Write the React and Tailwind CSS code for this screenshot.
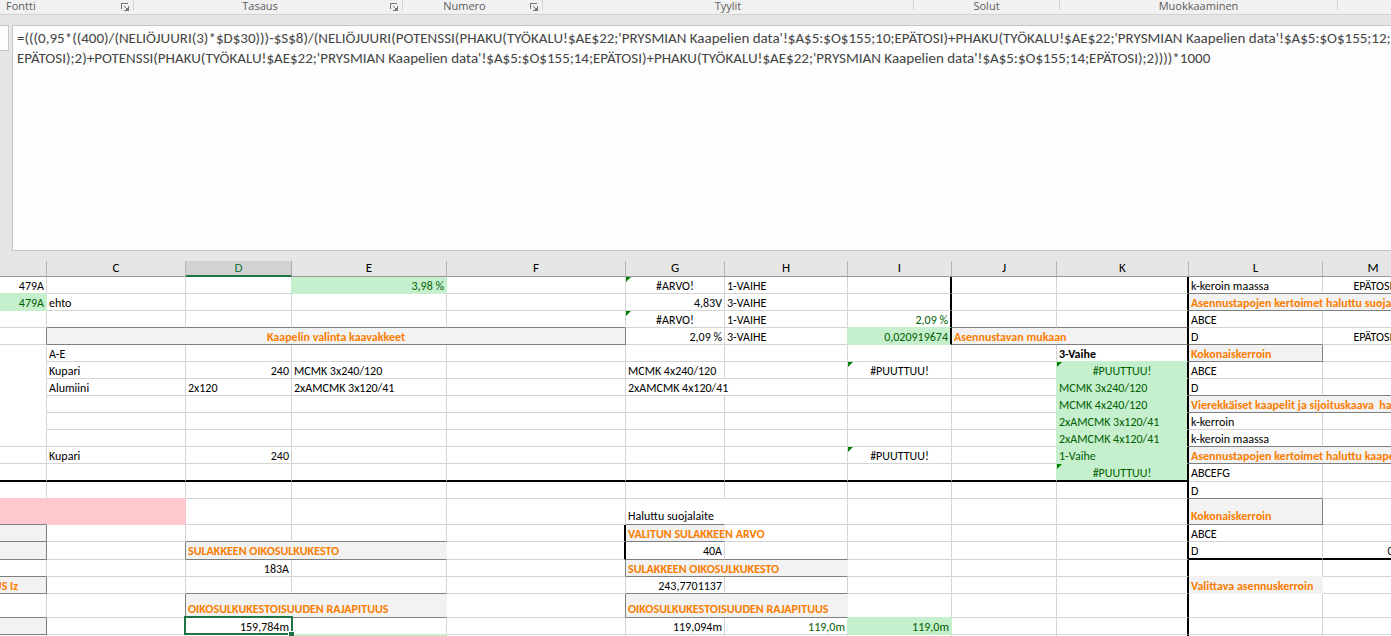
import React from "react";

const COLUMNS = [
  ["", "w-[47px]"],
  ["C", "w-[139px]"],
  ["D", "w-[106px]"],
  ["E", "w-[155px]"],
  ["F", "w-[179px]"],
  ["G", "w-[99px]"],
  ["H", "w-[123px]"],
  ["I", "w-[104px]"],
  ["J", "w-[105px]"],
  ["K", "w-[132px]"],
  ["L", "w-[134px]"],
  ["M", "w-[101px]"],
];

const TONES = {
  plain: "text-black",
  bold: "font-bold text-black",
  head: "bg-[#f2f2f2] font-bold text-[#fa7d00]",
  good: "bg-[#c6efce] text-[#006100]",
  goodText: "text-[#006100]",
  bad: "bg-[#ffc7ce]",
};

const RIGHT = {
  line: "border-r border-r-[#d4d4d4]",
  grey: "border-r border-r-[#7f7f7f]",
  good: "border-r border-r-[#c6efce]",
  head: "border-r border-r-[#f2f2f2]",
  bad: "border-r border-r-[#ffc7ce]",
  none: "border-r border-r-transparent",
  black: "border-r-2 border-r-black",
};

const BOTTOM = {
  line: "border-b border-b-[#d4d4d4]",
  grey: "border-b border-b-[#7f7f7f]",
  good: "border-b border-b-[#c6efce]",
  head: "border-b border-b-[#f2f2f2]",
  bad: "border-b border-b-[#ffc7ce]",
  black: "border-b-2 border-b-black",
};

const ALIGN = { l: "text-left", c: "text-center", r: "text-right" };

const _ = {};
const G = { b: "grey" };
const KB = { r: "black" };
const BB = { b: "black" };

// t text, a align, k tone, r right edge, b bottom edge, s column span, rs row span
const ROWS = [
  ["h-[17px]", [{ t: "479A", a: "r", b: "good" }, _, { r: "good" }, { t: "3,98 %", a: "r", k: "good", r: "good", b: "good" }, _, { t: "#ARVO!", a: "c", flag: true }, { t: "1-VAIHE" }, KB, _, KB, { t: "k-keroin maassa", b: "grey" }, { t: "EPÄTOSI", a: "c", b: "grey" }]],
  ["h-[17px]", [{ t: "479A", a: "r", k: "good", r: "good", b: "good" }, { t: "ehto" }, _, _, _, { t: "4,83V", a: "r" }, { t: "3-VAIHE" }, KB, _, KB, { t: "Asennustapojen kertoimet haluttu suojalaite", k: "head", b: "grey", s: 2 }]],
  ["h-[17px]", [_, G, G, G, G, { t: "#ARVO!", a: "c", flag: true }, { t: "1-VAIHE" }, { t: "2,09 %", a: "r", k: "goodText", r: "black", b: "good" }, G, { r: "black", b: "grey" }, { t: "ABCE" }, _]],
  ["h-[17px]", [{ r: "grey" }, { t: "Kaapelin valinta kaavakkeet", a: "c", k: "head", s: 4, r: "grey", b: "grey" }, { t: "2,09 %", a: "r" }, { t: "3-VAIHE", r: "good" }, { t: "0,020919674", a: "r", k: "good", r: "black", b: "good" }, { t: "Asennustavan mukaan", k: "head", s: 2, r: "black", b: "grey" }, { t: "D", b: "grey" }, { t: "EPÄTOSI", a: "c" }]],
  ["h-[17px]", [{ rs: 6 }, { t: "A-E" }, _, _, _, _, _, _, _, { t: "3-Vaihe", k: "bold", r: "black", b: "good" }, { t: "Kokonaiskerroin", k: "head", r: "grey", b: "grey" }, _]],
  ["h-[17px]", [{ t: "Kupari" }, { t: "240", a: "r" }, { t: "MCMK 3x240/120" }, _, { t: "MCMK 4x240/120" }, _, { t: "#PUUTTUU!", a: "c", flag: true }, { r: "good" }, { t: "#PUUTTUU!", a: "c", k: "good", flag: true, r: "black", b: "good" }, { t: "ABCE" }, _]],
  ["h-[17px]", [{ t: "Alumiini" }, { t: "2x120" }, { t: "2xAMCMK 3x120/41" }, _, { t: "2xAMCMK 4x120/41", s: 2 }, _, { r: "good" }, { t: "MCMK 3x240/120", k: "good", r: "black", b: "good" }, { t: "D", b: "grey" }, G]],
  ["h-[17px]", [_, _, _, _, _, _, _, { r: "good" }, { t: "MCMK 4x240/120", k: "good", r: "black", b: "good" }, { t: "Vierekkäiset kaapelit ja sijoituskaava  haluttu", k: "head", s: 2, b: "grey" }]],
  ["h-[17px]", [_, _, _, _, _, _, _, { r: "good" }, { t: "2xAMCMK 3x120/41", k: "good", r: "black", b: "good" }, { t: "k-kerroin" }, _]],
  ["h-[17px]", [_, _, _, _, _, _, _, { r: "good" }, { t: "2xAMCMK 4x120/41", k: "good", r: "black", b: "good" }, { t: "k-keroin maassa", b: "grey" }, G]],
  ["h-[17px]", [_, { t: "Kupari" }, { t: "240", a: "r" }, _, _, _, _, { t: "#PUUTTUU!", a: "c", flag: true }, { r: "good" }, { t: "1-Vaihe", k: "good", r: "black", b: "good" }, { t: "Asennustapojen kertoimet haluttu kaapeli", k: "head", s: 2, b: "grey" }]],
  ["h-[18px]", [BB, BB, BB, BB, BB, BB, BB, BB, { b: "black", r: "good" }, { t: "#PUUTTUU!", a: "c", k: "good", flag: true, r: "black", b: "black" }, { t: "ABCEFG" }, _]],
  ["h-[17px]", [{ b: "bad" }, { b: "bad" }, _, _, _, _, _, _, _, KB, { t: "D", b: "grey" }, _]],
  ["h-[26px]", [{ k: "bad", r: "bad", b: "grey" }, { k: "bad", r: "bad", b: "bad" }, _, _, _, { t: "Haluttu suojalaite", r: "none", b: "grey" }, _, _, _, KB, { t: "Kokonaiskerroin", k: "head", r: "grey", b: "grey" }, _]],
  ["h-[17px]", [{ k: "head", r: "grey", b: "grey" }, _, G, G, KB, { t: "VALITUN SULAKKEEN ARVO", k: "head", r: "head", b: "grey" }, _, _, _, KB, { t: "ABCE" }, _]],
  ["h-[18px]", [{ k: "head", r: "grey", b: "grey" }, { r: "grey" }, { t: "SULAKKEEN OIKOSULKUKESTO", k: "head", s: 2, r: "head", b: "grey" }, KB, { t: "40A", a: "r", b: "grey" }, G, _, _, KB, { t: "D", b: "black" }, { t: "0,8075", a: "r", b: "black" }]],
  ["h-[17px]", [G, _, { t: "183A", a: "r" }, _, { r: "grey" }, { t: "SULAKKEEN OIKOSULKUKESTO", k: "head", s: 2, r: "head", b: "grey" }, _, _, KB, { b: "head" }, _]],
  ["h-[17px]", [{ t: "US Iz", a: "r", k: "head", tail: true, r: "grey", b: "grey" }, _, G, G, _, { t: "243,7701137", a: "r", b: "grey" }, G, _, _, KB, { t: "Valittava asennuskerroin", k: "head", r: "head", b: "head" }, _]],
  ["h-[24px]", [G, { r: "grey" }, { t: "OIKOSULKUKESTOISUUDEN RAJAPITUUS", k: "head", s: 2, r: "head", b: "grey" }, { r: "grey" }, { t: "OIKOSULKUKESTOISUUDEN RAJAPITUUS", k: "head", s: 2, r: "head", b: "grey" }, { b: "good" }, _, KB, _, _]],
  ["h-[17px]", [{ k: "head", r: "grey", b: "grey" }, _, { t: "159,784m", a: "r", selected: true }, { b: "good" }, _, { t: "119,094m", a: "r" }, { t: "119,0m", a: "r", k: "goodText", r: "good" }, { t: "119,0m", a: "r", k: "good", r: "good", b: "good" }, _, KB, _, _]],
  ["h-[17px]", [_, _, _, { k: "good", r: "good" }, _, _, _, _, _, KB, _, _]],
];

function Cell({ t, a = "l", k = "plain", r = "line", b = "line", s, rs, flag, selected, tail, tall }) {
  return (
    <td
      colSpan={s}
      rowSpan={rs}
      className={`relative px-0 pt-0 align-bottom ${tall && b !== "black" ? "pb-px" : "pb-0"} ${TONES[k]} ${RIGHT[r]} ${BOTTOM[b]} ${ALIGN[a]}`}
    >
      {t && (
        <div className={tail ? "flex justify-end pr-7 whitespace-pre" : "px-0.5 whitespace-pre"}>{t}</div>
      )}
      {flag && (
        <svg className="absolute top-0 left-0 h-[5px] w-[5px]" viewBox="0 0 5 5" aria-hidden="true">
          <path d="M0 0H5L0 5Z" fill="#008000" />
        </svg>
      )}
      {selected && (
        <>
          <span className="absolute -top-0.5 -right-0.5 -bottom-px -left-0.5 z-10 border-2 border-[#217346]" />
          <span className="absolute -right-[3px] -bottom-[3px] z-20 h-1.5 w-1.5 border-t border-l border-white bg-[#217346]" />
        </>
      )}
    </td>
  );
}

function Launcher() {
  return (
    <button type="button" aria-label="Lisää asetuksia" className="flex w-4 items-start pt-[3px] pl-1">
      <svg width="8" height="8" viewBox="0 0 8 8" fill="none" shapeRendering="crispEdges" aria-hidden="true">
        <path d="M0.5 6V0.5H7" stroke="#777" />
        <path d="M3 3L7 7" stroke="#777" />
        <path d="M7.5 3V7.5H3" stroke="#777" />
        <path d="M7 4V7H4Z" fill="#777" />
      </svg>
    </button>
  );
}

const GROUPS = [
  ["Fontti", "w-[134px] shrink-0", true],
  ["Tasaus", "w-[269px] shrink-0", true],
  ["Numero", "w-[140px] shrink-0", true],
  ["Tyylit", "w-[371px] shrink-0", false],
  ["Solut", "w-[146px] shrink-0", false],
  ["Muokkaaminen", "w-[278px] shrink-0", false],
];

const FORMULA =
  "=(((0,95*((400)/(NELIÖJUURI(3)*$D$30)))-$S$8)/(NELIÖJUURI(POTENSSI(PHAKU(TYÖKALU!$AE$22;'PRYSMIAN Kaapelien data'!$A$5:$O$155;10;EPÄTOSI)+PHAKU(TYÖKALU!$AE$22;'PRYSMIAN Kaapelien data'!$A$5:$O$155;12;\nEPÄTOSI);2)+POTENSSI(PHAKU(TYÖKALU!$AE$22;'PRYSMIAN Kaapelien data'!$A$5:$O$155;14;EPÄTOSI)+PHAKU(TYÖKALU!$AE$22;'PRYSMIAN Kaapelien data'!$A$5:$O$155;14;EPÄTOSI);2))))*1000";

export default function App() {
  return (
    <div className="flex h-screen flex-col overflow-hidden bg-[#e6e6e6] font-[Calibri,Carlito,Lato,sans-serif]">
      <header className="flex h-[15px] shrink-0 border-b border-[#d2d2d2] bg-[#f1f1f1] font-['Open_Sans',sans-serif] text-[11px] leading-3 text-[#5c5c5c]">
        {GROUPS.map(([name, width, launcher], i) => (
          <div key={name} className={`flex ${width}`}>
            <span className={i === 0 ? "flex-1 pl-1.5" : "flex-1 text-center"}>{name}</span>
            {launcher && <Launcher />}
            <span className="h-2.5 w-px bg-[#d2d2d2]" />
          </div>
        ))}
      </header>

      <section className="mt-2.5 flex shrink-0 gap-[3px]">
        <input aria-label="Nimiruutu" className="h-[26px] w-[9px] border-y border-r border-[#c6c6c6] bg-[#fdfdfd]" />
        <textarea
          aria-label="Kaavarivi"
          defaultValue={FORMULA}
          wrap="off"
          spellCheck={false}
          className="block h-[226px] flex-1 resize-none overflow-hidden border-y border-l border-[#c6c6c6] bg-[#fdfdfd] pt-0.5 pl-1 text-[15px] leading-5 whitespace-pre text-[#444] outline-none"
        />
      </section>

      <main className="mt-2.5 flex-1 overflow-hidden">
        <table className="w-[1424px] table-fixed border-separate border-spacing-0 bg-white text-xs leading-[14px]">
          <colgroup>
            {COLUMNS.map(([name, width]) => (
              <col key={name} className={width} />
            ))}
          </colgroup>
          <thead>
            <tr className="h-4">
              {COLUMNS.map(([name]) => (
                <th
                  key={name}
                  scope="col"
                  className={
                    name === "D"
                      ? "border-r border-b-2 border-r-[#ababab] border-b-[#217346] bg-[#d2d2d2] p-0 align-top text-[13px] leading-[14px] font-normal text-[#217346]"
                      : "border-r border-b border-r-[#b5b5b5] border-b-[#9b9b9b] bg-[#e6e6e6] p-0 align-top text-[13px] leading-[14px] font-normal text-black"
                  }
                >
                  {name}
                </th>
              ))}
            </tr>
          </thead>
          <tbody>
            {ROWS.map(([height, cells], i) => (
              <tr key={i} className={height}>
                {cells.map((cell, j) => (
                  <Cell key={j} {...cell} tall={height !== "h-[17px]"} />
                ))}
              </tr>
            ))}
          </tbody>
        </table>
      </main>
    </div>
  );
}
